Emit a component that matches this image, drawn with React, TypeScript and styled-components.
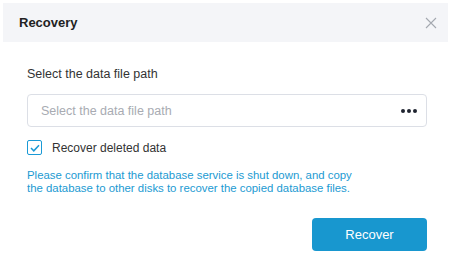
import React from "react";
import styled, { createGlobalStyle } from "styled-components";

const GlobalStyle = createGlobalStyle`
  body {
    margin: 0;
    background: #ffffff;
    font-family: "Liberation Sans", Arial, sans-serif;
  }
`;

const Dialog = styled.div`
  width: 451px;
  height: 262px;
  padding-top: 3px;
  box-sizing: border-box;
  background: #fff;
`;

const Header = styled.header`
  display: flex;
  align-items: center;
  justify-content: space-between;
  height: 39px;
  margin: 0 3px;
  padding: 0 11px 0 16px;
  background: #f4f5f8;
`;

const Title = styled.h1`
  margin: 0;
  font-size: 13px;
  font-weight: bold;
  color: #222;
`;

const CloseButton = styled.button`
  display: flex;
  border: none;
  background: none;
  padding: 0;
  cursor: pointer;
`;

const Body = styled.div`
  display: flex;
  flex-direction: column;
  padding: 25px 24px 0 27px;
`;

const Label = styled.div`
  font-size: 12.5px;
  color: #333;
  margin-bottom: 13px;
`;

const PathField = styled.div`
  display: flex;
  align-items: center;
  justify-content: space-between;
  height: 33px;
  box-sizing: border-box;
  border: 1px solid #dcdfe6;
  border-radius: 4px;
  padding: 0 9px 0 13px;
`;

const Placeholder = styled.span`
  font-size: 12.5px;
  color: #a8abb2;
`;

const Dots = styled.span`
  display: flex;
  gap: 2px;
`;

const Dot = styled.i`
  width: 4px;
  height: 4px;
  border-radius: 50%;
  background: #1f2430;
`;

const CheckRow = styled.label`
  display: flex;
  align-items: center;
  gap: 10px;
  margin-top: 13px;
  font-size: 12px;
  color: #333;
`;

const Box = styled.span`
  display: flex;
  align-items: center;
  justify-content: center;
  width: 15px;
  height: 15px;
  box-sizing: border-box;
  border: 1.5px solid #1a9ad6;
  border-radius: 2px;
`;

const Note = styled.p`
  margin: 14px 0 0;
  font-size: 11.4px;
  line-height: 12.5px;
  color: #1b9ad2;
`;

const Footer = styled.div`
  display: flex;
  justify-content: flex-end;
  margin-top: 24px;
`;

const PrimaryButton = styled.button`
  width: 115px;
  height: 33px;
  border: none;
  border-radius: 4px;
  background: #1897cf;
  color: #fff;
  font-family: inherit;
  font-size: 13px;
`;

export default function App() {
  return (
    <Dialog>
      <GlobalStyle />
      <Header>
        <Title>Recovery</Title>
        <CloseButton aria-label="close">
          <svg width="12" height="12" viewBox="0 0 12 12">
            <path d="M1 1L11 11M11 1L1 11" stroke="#a4a8b0" strokeWidth="1.1" fill="none" />
          </svg>
        </CloseButton>
      </Header>
      <Body>
        <Label>Select the data file path</Label>
        <PathField>
          <Placeholder>Select the data file path</Placeholder>
          <Dots>
            <Dot />
            <Dot />
            <Dot />
          </Dots>
        </PathField>
        <CheckRow>
          <Box>
            <svg width="10" height="8" viewBox="0 0 10 8">
              <path d="M1 4L3.8 6.8L9 1.2" stroke="#1a9ad6" strokeWidth="1.5" fill="none" />
            </svg>
          </Box>
          Recover deleted data
        </CheckRow>
        <Note>
          Please confirm that the database service is shut down, and copy
          <br />
          the database to other disks to recover the copied database files.
        </Note>
        <Footer>
          <PrimaryButton>Recover</PrimaryButton>
        </Footer>
      </Body>
    </Dialog>
  );
}
